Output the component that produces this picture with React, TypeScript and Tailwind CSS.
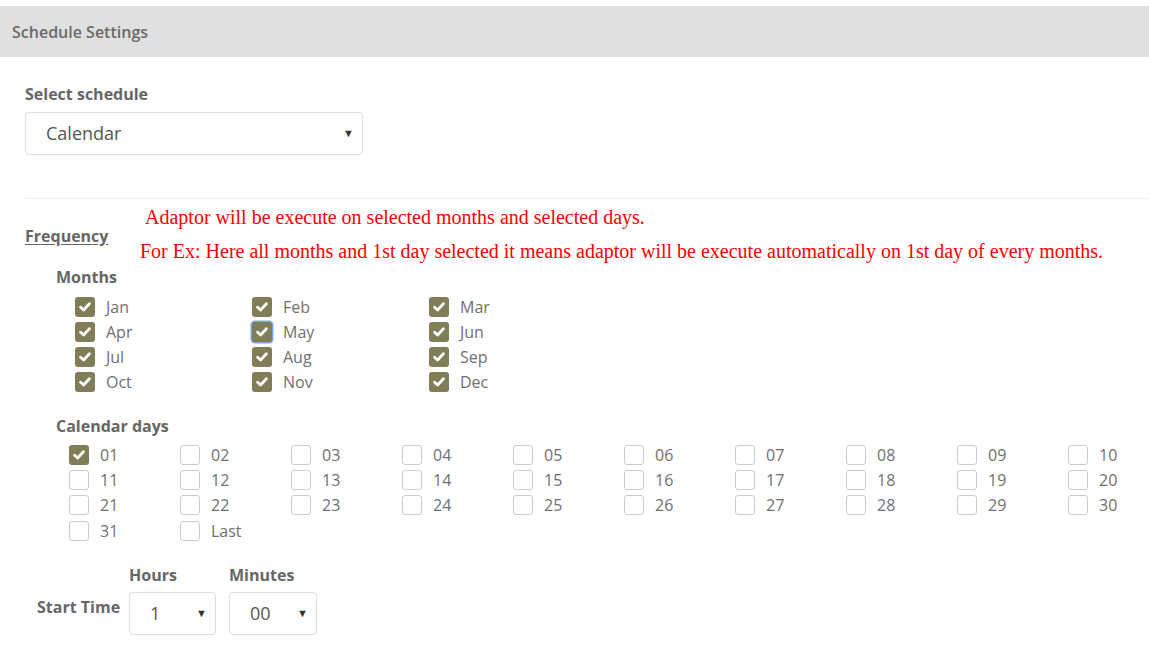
import React from "react";

const months = ["Jan", "Feb", "Mar", "Apr", "May", "Jun", "Jul", "Aug", "Sep", "Oct", "Nov", "Dec"];
const days = [
  ...Array.from({ length: 31 }, (_, i) => String(i + 1).padStart(2, "0")),
  "Last",
];

function Check({ checked, focused }: { checked: boolean; focused?: boolean }) {
  if (!checked) {
    return <span className="h-[20px] w-[20px] shrink-0 rounded-[3px] border border-[#cccccc] bg-white" />;
  }
  return (
    <span
      className={
        "flex h-[20px] w-[20px] shrink-0 items-center justify-center rounded-[3px] bg-[#7f7e57] " +
        (focused ? "ring-[1.5px] ring-[#7aa5e6]" : "")
      }
    >
      <svg width="12" height="10" viewBox="0 0 12 10" fill="none">
        <path d="M1.6 5.2 L4.6 8 L10.4 1.8" stroke="white" strokeWidth="2.8" strokeLinecap="round" strokeLinejoin="round" />
      </svg>
    </span>
  );
}

function Select({ value, width, textPad }: { value: string; width: string; textPad: string }) {
  return (
    <div className={`flex h-[43px] items-center justify-between rounded-[4px] border border-[#dddddd] bg-white pr-[8px] ${width} ${textPad}`}>
      <span className="text-[18px] text-[#555]">{value}</span>
      <span className="text-[11px] text-[#333]">▼</span>
    </div>
  );
}

export default function App() {
  return (
    <div className="min-h-[652px] bg-white pt-[6px] text-[#666] [font-family:'Open_Sans',sans-serif]">
      <div className="flex h-[51px] items-center bg-[#e0e0e0] px-[12px]">
        <span className="text-[16px] font-semibold text-[#6a6a6a]">Schedule Settings</span>
      </div>

      <div className="pl-[25px]">
        <div className="mt-[26px] text-[16px] font-bold leading-[22px]">Select schedule</div>
        <div className="mt-[7px]">
          <Select value="Calendar" width="w-[338px]" textPad="pl-[20px]" />
        </div>

        <div className="mt-[43px] border-t border-[#eeeeee]" />

        <div className="flex">
          <div className="w-[115px] pt-[25px]">
            <span className="text-[16px] font-bold leading-[24px] underline underline-offset-2">Frequency</span>
          </div>
          <div className="pt-[1px] text-[20px] leading-[34px] text-[#ff0000] [font-family:'Liberation_Serif',serif]">
            <div className="pl-[5px]">Adaptor will be execute on selected months and selected days.</div>
            <div>For Ex: Here all months and 1st day selected it means adaptor will be execute automatically on 1st day of every months.</div>
          </div>
        </div>

        <div className="pl-[31px]">
          <div className="-mt-[1px] text-[16px] font-bold leading-[20px]">Months</div>
          <div className="mt-[7px] grid grid-cols-[177px_177px_177px] pl-[19px]">
            {months.map((m) => (
              <div key={m} className="flex h-[25px] items-center gap-[11px]">
                <Check checked focused={m === "May"} />
                <span className="text-[16px] text-[#707070]">{m}</span>
              </div>
            ))}
          </div>

          <div className="mt-[22px] text-[16px] font-bold leading-[20px]">Calendar days</div>
          <div className="mt-[6px] grid grid-cols-[repeat(10,111px)] pl-[13px]">
            {days.map((d) => (
              <div key={d} className="flex h-[25.3px] items-center gap-[11px]">
                <Check checked={d === "01"} />
                <span className="text-[16px] text-[#707070]">{d}</span>
              </div>
            ))}
          </div>
        </div>

        <div className="mt-[22px] flex items-end pl-[12px]">
          <div className="w-[92px] pb-[18px] text-[16px] font-bold leading-[20px]">Start Time</div>
          <div className="flex gap-[13px]">
            <div>
              <div className="text-[16px] font-bold leading-[20px]">Hours</div>
              <div className="mt-[7px]">
                <Select value="1" width="w-[87px]" textPad="pl-[20px]" />
              </div>
            </div>
            <div>
              <div className="text-[16px] font-bold leading-[20px]">Minutes</div>
              <div className="mt-[7px]">
                <Select value="00" width="w-[88px]" textPad="pl-[20px]" />
              </div>
            </div>
          </div>
        </div>
      </div>
    </div>
  );
}
